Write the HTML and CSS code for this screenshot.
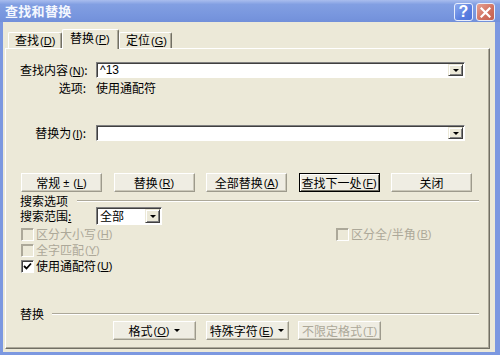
FILE: index.html
```html
<!DOCTYPE html>
<html>
<head>
<meta charset="utf-8">
<link rel="stylesheet" href="styles.css">
</head>
<body>
<div class="window">
  <div class="titlebar">
    <span class="title">查找和替换</span>
    <div class="tbtns">
      <span class="tbtn help">?</span>
      <span class="tbtn close"><svg width="11" height="11" viewBox="0 0 11 11"><path d="M1.5 1.5 L9.5 9.5 M9.5 1.5 L1.5 9.5" stroke="#fff" stroke-width="2.2" stroke-linecap="square"/></svg></span>
    </div>
  </div>
  <div class="frame">
    <div class="tabs">
      <div class="tab t1">查找<span class="mn">(<u>D</u>)</span></div>
      <div class="tab sel t2">替换<span class="mn">(<u>P</u>)</span></div>
      <div class="tab t3">定位<span class="mn">(<u>G</u>)</span></div>
    </div>
    <div class="panel">
      <div class="row find">
        <span class="lbl">查找内容<span class="mn">(<u>N</u>)</span>:</span>
        <div class="combo wide"><span class="val latin">^13</span><span class="arrow"></span></div>
      </div>
      <div class="row opts">
        <span class="lbl">选项:</span>
        <span class="val">使用通配符</span>
      </div>
      <div class="row repl">
        <span class="lbl">替换为<span class="mn">(<u>I</u>)</span>:</span>
        <div class="combo wide"><span class="val"></span><span class="arrow"></span></div>
      </div>
      <div class="btnrow top">
        <span class="btn">常规 <span class="pm">±</span> <span class="mn">(<u>L</u>)</span></span>
        <span class="btn">替换<span class="mn">(<u>R</u>)</span></span>
        <span class="btn">全部替换<span class="mn">(<u>A</u>)</span></span>
        <span class="btn def">查找下一处<span class="mn">(<u>F</u>)</span></span>
        <span class="btn">关闭</span>
      </div>
      <div class="section s1">
        <span>搜索选项</span><span class="line"></span>
      </div>
      <div class="row scope">
        <span class="slbl">搜索范围<u>:</u></span>
        <div class="combo small"><span class="val">全部</span><span class="arrow"></span></div>
      </div>
      <div class="cb cb1">
        <span class="item first dis"><span class="box"></span>区分大小写<span class="mn">(<u>H</u>)</span></span>
        <span class="item dis"><span class="box"></span>区分全/半角<span class="mn">(<u>B</u>)</span></span>
      </div>
      <div class="cb cb2">
        <span class="item dis"><span class="box"></span>全字匹配<span class="mn">(<u>Y</u>)</span></span>
      </div>
      <div class="cb cb3">
        <span class="item"><span class="box on"><svg width="9" height="9" viewBox="0 0 9 9"><path d="M1 4 L3.5 6.5 L8 1.5" fill="none" stroke="#000" stroke-width="1.8"/></svg></span>使用通配符<span class="mn">(<u>U</u>)</span></span>
      </div>
      <div class="section s2">
        <span>替换</span><span class="line"></span>
      </div>
      <div class="btnrow bottom">
        <span class="btn">格式<span class="mn">(<u>O</u>)</span><span class="tri"></span></span>
        <span class="btn">特殊字符<span class="mn">(<u>E</u>)</span><span class="tri"></span></span>
        <span class="btn dis">不限定格式<span class="mn">(<u>T</u>)</span></span>
      </div>
    </div>
  </div>
</div>
</body>
</html>
```

FILE: styles.css
```css
* { box-sizing: border-box; }
html, body { margin: 0; padding: 0; }
body {
  width: 500px;
  height: 355px;
  overflow: hidden;
  font-family: "Noto Sans CJK SC", "Liberation Sans", sans-serif;
  font-size: 12px;
  line-height: 14px;
  color: #000;
  background: #ECE9D8;
}
.window {
  width: 500px;
  height: 355px;
  display: flex;
  flex-direction: column;
  background: #ECE9D8;
}
.titlebar {
  height: 22px;
  flex: none;
  display: flex;
  align-items: center;
  justify-content: space-between;
  padding: 0 5px 0 5px;
  background: linear-gradient(#a9bdee, #829fe2 20%, #7896de 70%, #7290da);
}
.title {
  color: #f4f7fe;
  font-weight: bold;
  font-size: 13px;
  line-height: 22px;
  letter-spacing: 0.3px;
}
.tbtns { display: flex; gap: 3px; margin-top: 2px; }
.tbtn {
  width: 19px;
  height: 18px;
  border: 1px solid #e8eefc;
  border-radius: 3px;
  display: flex;
  align-items: center;
  justify-content: center;
}
.help {
  background: linear-gradient(135deg, #8eabef, #5a7fe0 60%, #4d72d8);
  color: #fff;
  font: bold 16px "Liberation Sans", sans-serif;
  line-height: 16px;
}
.close {
  background: linear-gradient(135deg, #e6a294, #d0705f 60%, #c4604f);
}
.frame {
  flex: 1;
  display: flex;
  flex-direction: column;
  border-left: 3px solid #7c98e0;
  border-right: 5px solid #7c98e0;
  border-bottom: 3px solid #7c98e0;
  padding: 7px 5px 3px 2px;
}
.tabs {
  display: flex;
  align-items: flex-end;
  height: 19px;
  padding-left: 3px;
  position: relative;
  z-index: 1;
  flex: none;
}
.tab {
  height: 16px;
  border-top: 1px solid #fff;
  border-left: 1px solid #fff;
  border-right: 1px solid #716f64;
  box-shadow: inset -1px 0 #aca899;
  border-radius: 2px 2px 0 0;
  padding-left: 6px;
  line-height: 14px;
  white-space: nowrap;
  background: #ECE9D8;
}
.t1 { width: 54px; }
.t2 { width: 57px; }
.t3 { width: 53px; }
.tab.sel {
  height: 20px;
  margin-bottom: -1px;
  padding-left: 7px;
  padding-top: 1px;
}
.mn {
  font-family: "Liberation Sans", sans-serif;
  font-size: 11px;
  margin-left: 1px;
}
.panel {
  flex: 1;
  border: 1px solid;
  border-color: #fff #716f64 #716f64 #fff;
  box-shadow: inset -1px -1px #aca899;
  padding: 0 10px 0 14px;
}
.row { display: flex; align-items: center; }
.find { margin-top: 13px; height: 16px; }
.opts { margin-top: 3px; height: 14px; }
.repl { margin-top: 30px; height: 16px; }
.lbl {
  width: 66px;
  margin-right: 10px;
  text-align: right;
  white-space: nowrap;
}
.combo {
  height: 16px;
  background: #fff;
  border: 1px solid;
  border-color: #808080 #fff #fff #808080;
  box-shadow: inset 1px 1px #404040;
  display: flex;
  align-items: center;
  justify-content: space-between;
  padding-left: 3px;
}
.combo.wide { width: 369px; }
.latin { font-family: "Liberation Sans", sans-serif; font-size: 12px; }
.arrow {
  width: 15px;
  height: 12px;
  margin-right: 1px;
  background: #ECE9D8;
  border: 1px solid;
  border-color: #ECE9D8 #404040 #404040 #ECE9D8;
  box-shadow: inset 1px 1px #fff, inset -1px -1px #808080;
  display: flex;
  align-items: center;
  justify-content: center;
}
.arrow::after {
  content: "";
  border-left: 3px solid transparent;
  border-right: 3px solid transparent;
  border-top: 3px solid #000;
  margin-top: 1px;
}
.btnrow { display: flex; height: 19px; }
.btnrow.top { margin-top: 32px; margin-left: 1px; gap: 11.5px; }
.btnrow.bottom { margin-left: 93px; gap: 9.5px; }
.btn {
  width: 81px;
  height: 19px;
  background: #efede3;
  border: 1px solid;
  border-color: #fff #9d9a8c #9d9a8c #fff;
  box-shadow: inset -1px -1px #cbc8b9;
  display: flex;
  align-items: center;
  justify-content: center;
  white-space: nowrap;
  line-height: 14px;
}
.btnrow.bottom .btn { width: 83px; }
.btn.def {
  border-color: #000;
  box-shadow: inset 1px 1px #fff, inset -1px -1px #716f64;
}
.btn.dis { color: #aca899; }
.pm { font-family: "Liberation Sans", sans-serif; font-size: 11px; margin: 0 3px; }
.tri {
  display: inline-block;
  margin-left: 5px;
  border-left: 3px solid transparent;
  border-right: 3px solid transparent;
  border-top: 3px solid #000;
}
.section { display: flex; align-items: center; }
.section .line {
  flex: 1;
  height: 2px;
  border-top: 1px solid #aca899;
  border-bottom: 1px solid #fff;
}
.s1 { margin-top: 2px; height: 13px; }
.s1 .line { margin-left: 9px; }
.s2 { margin-top: 34px; height: 14px; }
.s2 .line { margin-left: 8px; }
.scope { height: 18px; }
.slbl { width: 76px; white-space: nowrap; }
.combo.small { width: 66px; height: 18px; }
.combo.small .arrow { height: 14px; }
.cb { display: flex; align-items: center; height: 14px; margin-left: 1px; }
.cb1 { margin-top: 2px; }
.cb2 { margin-top: 2px; }
.cb3 { margin-top: 2px; }
.item { display: flex; align-items: center; white-space: nowrap; height: 14px; line-height: 14px; }
.item.first { width: 315px; }
.item.dis { color: #aca899; }
.box {
  width: 13px;
  height: 13px;
  margin-right: 2px;
  border: 1px solid;
  border-color: #808080 #fff #fff #808080;
  box-shadow: inset 1px 1px #404040;
  background: #fff;
  display: flex;
  align-items: center;
  justify-content: center;
}
.item.dis .box {
  border-color: #aca899 #fff #fff #aca899;
  box-shadow: inset 1px 1px #aca899;
  background: #ECE9D8;
}
```
